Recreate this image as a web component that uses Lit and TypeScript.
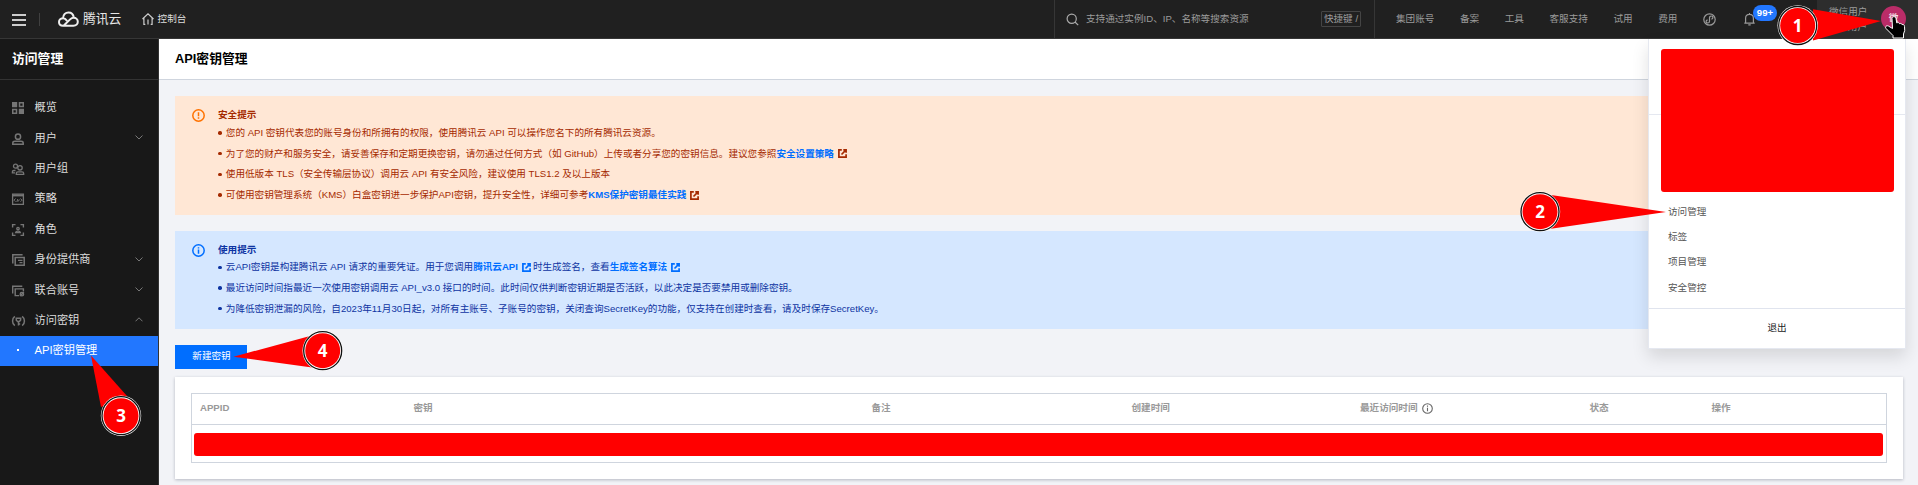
import { LitElement, html, css, svg } from "lit";
import { customElement } from "lit/decorators.js";

const ext = html`<svg class="ext" viewBox="0 0 9 9" fill="none" stroke="currentColor" stroke-width="1.7"><path d="M3.8.9H.9v7.2h7.2V5.200M5.3.9h2.800v2.800M7.800 1.200 3.500 5.500"/></svg>`;

const icons: Record<string, unknown> = {
  grid: svg`<path d="M0 0h5.200v5.200H0zM6.800 6.800H12V12H6.800z"/><path fill="none" stroke="#767676" stroke-width="1.500" d="M7.500.750h3.750v3.750H7.500zM.750 7.500h3.750v3.750H.750z"/>`,
  user: svg`<g fill="none" stroke="#767676" stroke-width="1.500"><circle cx="6" cy="3.700" r="2.600"/><path d="M.8 11.300V10c0-1 1-1.700 2.200-1.700h6c1.200 0 2.200.7 2.200 1.700v1.300z"/></g>`,
  group: svg`<g fill="none" stroke="#767676" stroke-width="1.300"><circle cx="3.500" cy="3.200" r="2"/><path d="M3.500 7.500H1.800C.9 7.500.4 8 .4 8.800v1.100h2.700"/><circle cx="8" cy="4.800" r="2.200"/><path d="M4.300 11.400v-1c0-1 .8-1.500 1.700-1.500h4c1 0 1.700.5 1.700 1.500v1z"/></g>`,
  policy: svg`<g fill="none" stroke="#767676" stroke-width="1.300"><path d="M.6 1.200h10.800v10.200H.6z"/><path stroke-width="2" d="M1 2.400h10"/><path stroke-width="1" d="M3.500 5.500 2 7.200l1.500 1.500M4.800 9l1-3M6.200 8.500l1.200-2M8.500 5.500 10 7.200 8.500 8.700"/></g>`,
  role: svg`<g fill="none" stroke="#767676" stroke-width="1.400"><path d="M.6 3.500V.6h2.900M8.500.6h2.900v2.900M11.400 8.500v2.900H8.500M3.500 11.400H.6V8.500"/><circle cx="6" cy="4.600" r="1.200"/><path d="M3.600 8.600c.2-1.200 1.300-1.500 2.400-1.500s2.200.3 2.400 1.500z"/></g>`,
  idp: svg`<g fill="none" stroke="#767676" stroke-width="1.500"><path d="M.8 9.500V.8h9.800M3.200 3.600h9v7.600h-9z"/><path stroke-width="1.200" d="M6 6.300h4.500M7.500 8.600h3"/></g>`,
  union: svg`<g fill="none" stroke="#767676" stroke-width="1.400"><path d="M.7 8.500V1.200h9.600M7 10.600H3.200V3.900h8.200V6.600"/><circle cx="9.900" cy="9.200" r="1.700"/><path d="m8 11 3.900-3.700"/></g>`,
  key: svg`<g fill="none" stroke="#767676" stroke-width="1.500"><path d="M2.800 1.300C-.2 3.500-.2 8.500 2.800 10.700M10.200 1.300c3 2.200 3 7.200 0 9.400"/><path d="M4.300 3.300h4.400l-.2 2-1.300 1.300H5.600L4.300 5.300zM6.500 6.500v4M6.500 9h1.700"/></g>`,
};

const nav: [string, string, string][] = [
  ["grid", "概览", ""], ["user", "用户", "down"], ["group", "用户组", ""], ["policy", "策略", ""],
  ["role", "角色", ""], ["idp", "身份提供商", "down"], ["union", "联合账号", "down"], ["key", "访问密钥", "up"],
];

const callouts = [
  { n: 1, x: 1797.700, y: 25.500, points: "1881,21 1813,9.200 1813,40.500" },
  { n: 2, x: 1540, y: 211.700, points: "1666,212 1551,195 1551,228.700" },
  { n: 3, x: 121, y: 415.700, points: "91,355.500 101,407 127,396" },
  { n: 4, x: 322.700, y: 350.700, points: "233.500,356.700 310,336 312,367.500" },
];

@customElement("app-root")
export class AppRoot extends LitElement {
  static styles = css`
    :host { display: block; position: relative; width: 100%; height: 485px; overflow: hidden; background: #f2f3f7;
      font: 9.6px/1.5 "Liberation Sans", "Noto Sans CJK SC", sans-serif; color: #000; }
    * { box-sizing: border-box; }
    svg { display: block; flex: none; }
    .top { height: 39px; background: #202020; border-bottom: 1px solid #363636; display: flex; align-items: stretch; color: #9b9b9b; }
    .brand { flex: 1; display: flex; align-items: center; color: #ddd; }
    .burger { margin-left: 12px; }
    .sep { width: 1px; height: 13px; background: #404040; margin: 0 18px 0 13px; }
    .logo { font-size: 12.8px; margin-left: 4px; color: #e6e6e6; line-height: 20px; width: 59.3px; white-space: nowrap; }
    .console { margin-left: 3.3px; }
    .search { width: 321px; border: solid #363636; border-width: 0 1px; display: flex; align-items: center; padding: 0 13px 0 11px; }
    .search .q { margin-left: 7px; flex: 1; }
    .hot { width: 40px; height: 16px; border: 1px solid #444; line-height: 13px; text-align: center; white-space: nowrap; border-radius: 1px; }
    .links { width: 442px; display: flex; align-items: center; padding-left: 21px; position: relative; white-space: nowrap; }
    .links span { margin-right: 25.6px; }
    .links .bell { margin-left: 28.3px; }
    .badge { position: absolute; left: 378px; top: 5px; width: 24px; height: 16px; border-radius: 8px; background: #2277ff; color: #fff; font-weight: bold; line-height: 16px; text-align: center; }
    .account { width: 101px; background: #2d2d2d; display: flex; align-items: flex-start; padding: 5px 0 0 12px; }
    .names { width: 52px; line-height: 14.6px; }
    .names div + div { text-align: right; padding-right: 14px; }
    .avatar { width: 25px; height: 25px; border-radius: 50%; background: #ba2c68; color: #fff; text-align: center; line-height: 24px; margin-top: 1px; }
    .body { display: flex; height: 446px; }
    .side { width: 159px; background: #181818; border-right: 1px solid #333; color: #dcdcdc; font-size: 11.2px; }
    .side h2 { margin: 0; height: 41px; border-bottom: 1px solid #333; padding-left: 12px; font-size: 12.8px; line-height: 39px; color: #fff; }
    .menu { padding-top: 12px; }
    .item { height: 30.4px; display: flex; align-items: center; padding: 0 15px 0 12px; line-height: 18px; }
    .item .ico { fill: #767676; margin-right: 9.5px; margin-top: 2px; overflow: visible; }
    .item .lbl { flex: 1; }
    .on { background: #2277ff; color: #fff; height: 30px; width: 158px; margin-top: .4px; padding-bottom: 1px; }
    .on i { width: 2px; height: 2px; background: #fff; margin: 0 15.5px 0 5px; }
    .main { flex: 1; min-width: 0; }
    .main h1 { margin: 0; height: 41px; background: #fff; border-bottom: 1px solid #cfd5de; padding-left: 16px; font-size: 12.8px; line-height: 39px; }
    .content { padding: 16px 15px 0 16px; }
    .tip { display: flex; padding: 12px 16px 0 17px; }
    .tip svg.mark { margin: 1px 13px 0 0; }
    .tip b.t { display: block; line-height: 14px; }
    .warn { background: #ffe7d5; height: 119px; color: #a52a00; }
    .warn ul { padding-top: .6px; }
    .info { background: #d5e7ff; height: 98px; color: #0e34a2; margin-top: 16px; }
    .tip ul { list-style: none; margin: 0; padding-left: 0; }
    .tip li { height: 20.7px; line-height: 20px; display: flex; align-items: center; white-space: pre; }
    .tip li::before { content: ""; width: 3.5px; height: 3.5px; border-radius: 50%; background: currentColor; margin-right: 4.3px; }
    .tip a { color: #006eff; font-weight: bold; }
    .ext { width: 9px; height: 9px; margin: 0 2.4px 0 3.6px; }
    .btn { border: 0; display: block; margin: 16px 0 8px; width: 72px; height: 24px; background: #006eff; color: #fff; font: inherit; padding: 0 0 1px 1px; }
    .card { background: #fff; box-shadow: 0 1px 3px rgba(54,58,80,.32); height: 102px; padding: 16px; }
    .table { border: 1px solid #cfd5de; height: 70px; }
    .row { height: 31px; border-bottom: 1px solid #cfd5de; display: grid; grid-template-columns: 213.5px 458px 260px 228.5px 229.5px 122px 1fr; padding: 0 0 1px 8px; align-items: center; font-weight: bold; color: #999; }
    .row div { display: flex; align-items: center; gap: 4px; }
    .mask { background: #f00; border-radius: 3px; }
    .table .mask { height: 23px; margin: 8px 3px 0 2px; }
    .drop { position: absolute; left: 1648px; top: 39px; width: 258px; height: 310px; background: #fff; border: solid #e5e8f0; border-width: 0 1px 1px; box-shadow: 0 8px 16px rgba(0,0,0,.12); }
    .drop .id { height: 76px; border-bottom: 1px solid #e5e8f0; }
    .drop .mask { position: absolute; left: 12px; top: 10px; width: 233px; height: 143px; }
    .drop ul { list-style: none; margin: 0; padding: 84px 0 0 19px; height: 194px; border-bottom: 1px solid #e0e4ee; color: #555; }
    .drop li { height: 25.2px; line-height: 25px; }
    .drop .quit { height: 39px; line-height: 38px; text-align: center; color: #222; }
    .overlay { position: absolute; left: 0; top: 0; pointer-events: none; }
    .overlay text { font: bold 17px "Noto Sans", sans-serif; fill: #fff; text-anchor: middle; }
  `;

  render() {
    return html`
      <header class="top">
        <div class="brand">
          <svg class="burger" width="14" height="13" fill="#ccc"><path d="M0 1h14v2H0zM0 6h14v2H0zM0 11h14v2H0z"/></svg>
          <span class="sep"></span>
          <svg width="21" height="16" viewBox="0 0 21 16" fill="none" stroke="#eee" stroke-width="2"><path d="M6 14.700h9.500c2.600 0 4.300-1.800 4.300-4s-1.800-4-4.100-4c-1.500 0-2.500.6-3.600 1.700L5.800 14.500M9 9.800C7.800 8.200 6.700 7.300 5.200 7.300 2.800 7.300 1 8.900 1 11s1.700 3.700 4.100 3.700h1.500M5 7.200C5.200 3.800 7.500 1.400 10.500 1.400c2.700 0 4.800 1.800 5.300 5.100"/></svg>
          <span class="logo">腾讯云</span>
          <svg width="12" height="12" viewBox="0 0 12 12" fill="none" stroke="#ccc" stroke-width="1.200"><path d="M.5 6 6 .9 11.500 6M1.900 5v6.400h1.400M10.100 5v6.400H8.700M6 6.500v5"/></svg>
          <span class="console">控制台</span>
        </div>
        <div class="search">
          <svg width="13" height="13" viewBox="0 0 13 13" fill="none" stroke="#aaa" stroke-width="1.200"><circle cx="5.700" cy="5.700" r="4.600"/><path d="m9 9 3.200 3.200"/></svg>
          <span class="q">支持通过实例ID、IP、名称等搜索资源</span><span class="hot">快捷键 /</span>
        </div>
        <nav class="links">
          ${["集团账号", "备案", "工具", "客服支持", "试用", "费用"].map((t) => html`<span>${t}</span>`)}
          <svg width="13" height="13" viewBox="0 0 13 13" fill="none" stroke="#999" stroke-width="1.200"><circle cx="6.500" cy="6.500" r="5.700"/><path d="M6.500 8.200V4.800c0-1.200.8-1.800 1.700-1.800 1 0 1.700.7 1.700 1.600S9.200 6 8.400 6.200M6.500 4.800v3.400c0 1.200-.8 1.800-1.700 1.800-1 0-1.700-.7-1.700-1.600s.7-1.400 1.500-1.600"/></svg>
          <svg class="bell" width="11" height="13" viewBox="0 0 11 13" fill="none" stroke="#999" stroke-width="1.200"><path d="M.3 10.200h10.400M1.600 10V5.300c0-2.300 1.700-3.900 3.900-3.900s3.900 1.600 3.900 3.900V10M5.500 0v1.500M4.300 11.800h2.400"/></svg>
          <b class="badge">99+</b>
        </nav>
        <div class="account"><div class="names"><div>微信用户</div><div>子用户</div></div><div class="avatar">微</div></div>
      </header>
      <div class="body">
        <aside class="side">
          <h2>访问管理</h2>
          <div class="menu">
            ${nav.map(([i, t, a]) => html`<div class="item"><svg class="ico" width="13" height="12" viewBox="0 0 13 12">${icons[i]}</svg><span class="lbl">${t}</span>${a ? html`<svg width="8" height="5" fill="none" stroke="#777" stroke-width="1"><path d=${a === "up" ? "M.5 4.300 4 .8l3.500 3.500" : "M.5.5 4 4 7.500.5"}/></svg>` : ""}</div>`)}
            <div class="item on"><i></i><span class="lbl">API密钥管理</span></div>
          </div>
        </aside>
        <main class="main">
          <h1>API密钥管理</h1>
          <div class="content">
            <section class="tip warn">
              <svg class="mark" width="13" height="13" viewBox="0 0 13 13" fill="none" stroke="#ff7200" stroke-width="1.500"><circle cx="6.500" cy="6.500" r="5.700"/><path d="M6.500 3.200v4M6.500 8.300v1.500"/></svg>
              <div><b class="t">安全提示</b>
                <ul>
                  <li>您的 API 密钥代表您的账号身份和所拥有的权限，使用腾讯云 API 可以操作您名下的所有腾讯云资源。</li>
                  <li>为了您的财产和服务安全，请妥善保存和定期更换密钥，请勿通过任何方式（如 GitHub）上传或者分享您的密钥信息。建议您参照<a>安全设置策略</a>${ext}</li>
                  <li>使用低版本 TLS（安全传输层协议）调用云 API 有安全风险，建议使用 TLS1.2 及以上版本</li>
                  <li>可使用密钥管理系统（KMS）白盒密钥进一步保护API密钥，提升安全性，详细可参考<a>KMS保护密钥最佳实践</a>${ext}</li>
                </ul></div>
            </section>
            <section class="tip info">
              <svg class="mark" width="13" height="13" viewBox="0 0 13 13" fill="none" stroke="#006eff" stroke-width="1.500"><circle cx="6.500" cy="6.500" r="5.700"/><path d="M6.500 5.600v4.200M6.500 3.200v1.400"/></svg>
              <div><b class="t">使用提示</b>
                <ul>
                  <li>云API密钥是构建腾讯云 API 请求的重要凭证。用于您调用<a>腾讯云API</a><a>${ext}</a>时生成签名，查看<a>生成签名算法</a><a>${ext}</a></li>
                  <li>最近访问时间指最近一次使用密钥调用云 API_v3.0 接口的时间。此时间仅供判断密钥近期是否活跃，以此决定是否要禁用或删除密钥。</li>
                  <li>为降低密钥泄漏的风险，自2023年11月30日起，对所有主账号、子账号的密钥，关闭查询SecretKey的功能，仅支持在创建时查看，请及时保存SecretKey。</li>
                </ul></div>
            </section>
            <button class="btn">新建密钥</button>
            <section class="card"><div class="table">
              <div class="row"><div>APPID</div><div>密钥</div><div>备注</div><div>创建时间</div>
                <div>最近访问时间<svg width="11" height="11" viewBox="0 0 11 11" fill="none" stroke="#666" stroke-width="1.100"><circle cx="5.500" cy="5.500" r="4.800"/><path d="M5.500 4.700v3.600M5.500 2.600v1.200"/></svg></div>
                <div>状态</div><div>操作</div></div>
              <div class="mask"></div>
            </div></section>
          </div>
        </main>
      </div>
      <div class="drop">
        <div class="id"></div><div class="mask"></div>
        <ul><li>访问管理</li><li>标签</li><li>项目管理</li><li>安全管控</li></ul>
        <div class="quit">退出</div>
      </div>
      <svg class="overlay" width="1918" height="485">
        ${callouts.map((c) => svg`<polygon points=${c.points} fill="#f00"/><circle cx=${c.x} cy=${c.y} r="20.200" fill="#fff"/><circle cx=${c.x} cy=${c.y} r="19" fill="#fff" stroke="#111" stroke-width="1.300"/><circle cx=${c.x} cy=${c.y} r="17.500" fill="#f00"/><text x=${c.x} y=${c.y + 6.500}>${c.n}</text>`)}
        <path d="M1892 18.500c0-2.400 3.600-2.400 4 0l.8 4.500c1-.8 2.400-.5 2.800.7 1-.6 2.200-.2 2.500.9 1.300-.4 2.300.3 2.400 1.700l.2 4.200-1.200 3.500v4h-10.500v-2.500l-6.800-6.800c-1.600-1.700.3-3.800 2.300-2.600l4 2.400z" fill="#000" stroke="#fff" stroke-width="1"/>
      </svg>
    `;
  }
}
